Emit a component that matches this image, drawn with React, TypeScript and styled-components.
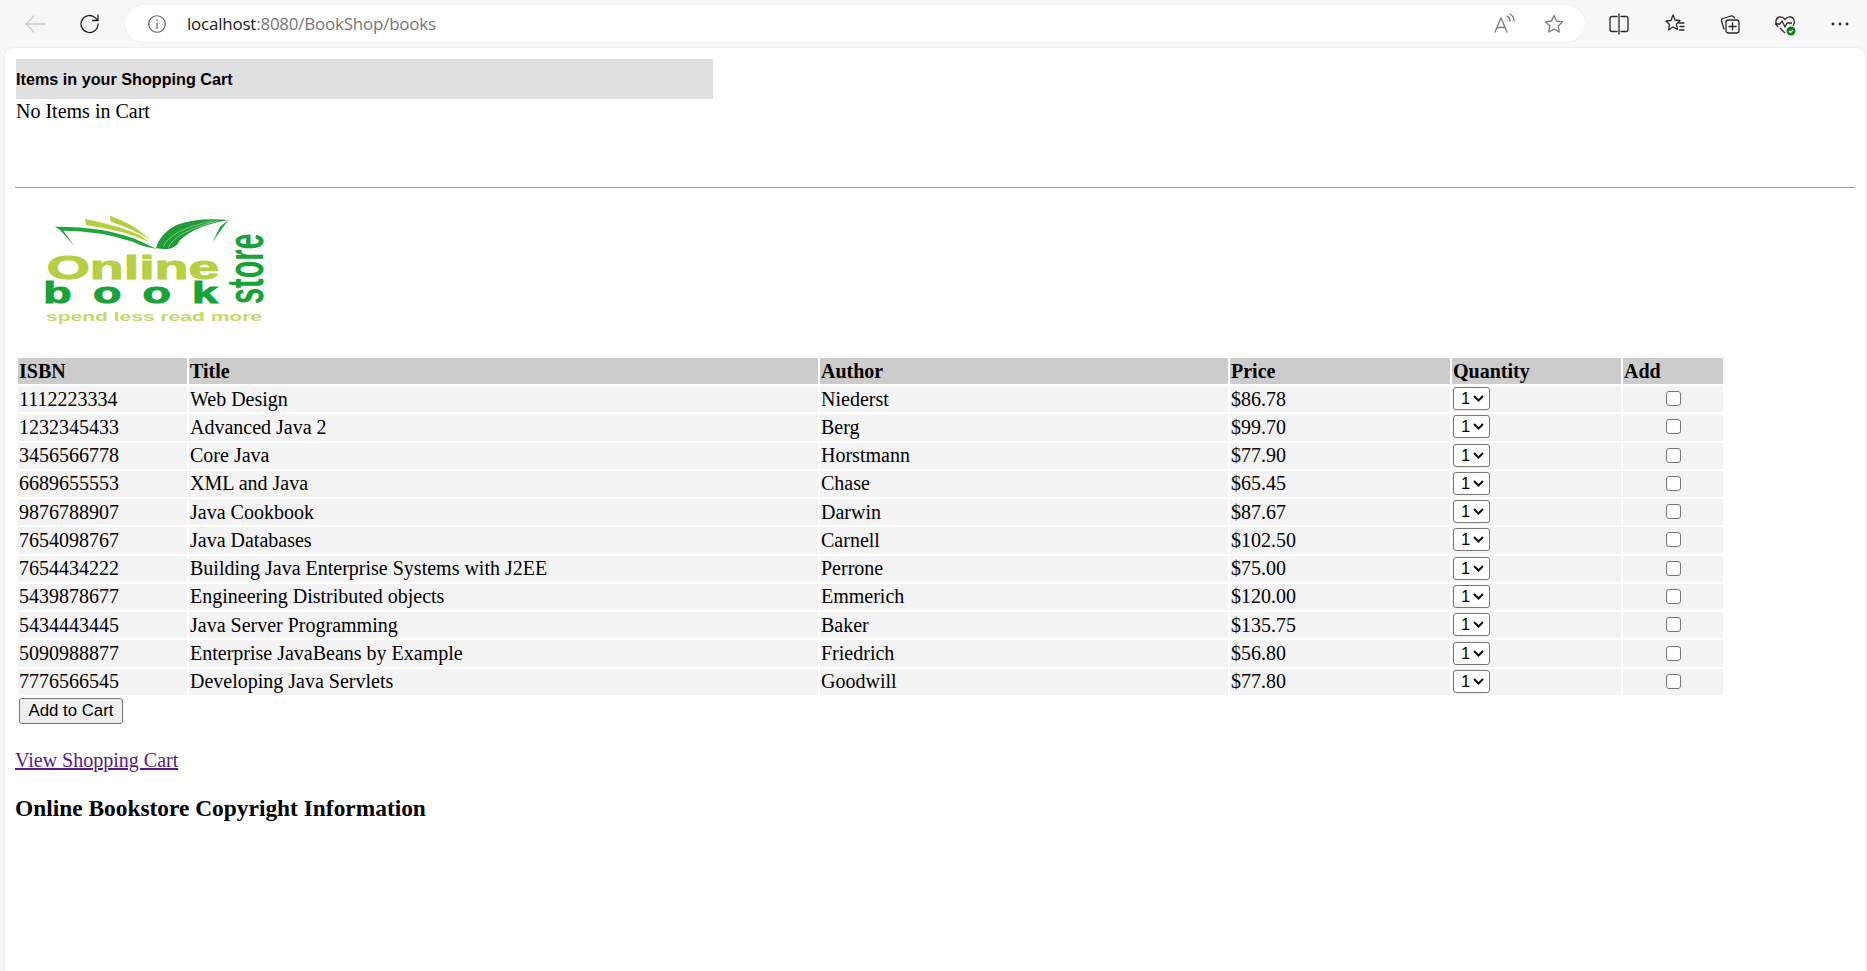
import React from 'react';
import styled, { createGlobalStyle } from 'styled-components';

const GlobalStyle = createGlobalStyle`
  html, body {
    margin: 0;
    padding: 0;
    height: 100%;
    overflow: hidden;
    background: #f7f7f7;
  }
`;

const Window = styled.div`
  width: 1867px;
  height: 971px;
  display: flex;
  flex-direction: column;
  background: #f7f7f7;
  overflow: hidden;
`;

const Toolbar = styled.div`
  height: 48px;
  flex: none;
  display: flex;
  align-items: center;
  box-sizing: border-box;
  padding: 0 0 1px 22px;
`;

const NavButton = styled.div<{ gap?: number }>`
  width: 26px;
  height: 26px;
  flex: none;
  display: flex;
  align-items: center;
  justify-content: center;
  margin-right: ${(p) => p.gap ?? 0}px;
`;

const AddressBar = styled.div`
  width: 1460px;
  height: 37px;
  flex: none;
  margin-right: 21px;
  background: #fff;
  border-radius: 19px;
  display: flex;
  align-items: center;
  padding: 0 18px 0 21px;
  box-sizing: border-box;
  box-shadow: 0 0 2px rgba(0, 0, 0, 0.08);
`;

const Url = styled.div`
  flex: 1;
  margin-left: 19px;
  font: 16.95px 'Open Sans', 'Noto Sans', sans-serif;
  color: #767676;
  letter-spacing: -0.2px;
  span {
    color: #1a1a1a;
  }
`;

const Page = styled.div`
  flex: 1;
  margin: 0 2px 0 5px;
  background: #fff;
  border-radius: 8px 8px 0 0;
  box-shadow: 0 0 2px rgba(0, 0, 0, 0.12);
  padding: 11px 10px 0 10px;
  font: 20px/22px 'Liberation Serif', 'Times New Roman', serif;
  color: #000;
`;

const CartPanel = styled.div`
  width: 697px;
  margin-left: 1px;
`;

const CartHeading = styled.div`
  height: 40px;
  background: #e0e0e0;
  font: bold 16.2px/41px 'Liberation Sans', Arial, sans-serif;
`;

const CartEmpty = styled.div`
  height: 26px;
  line-height: 25px;
`;

const Rule = styled.hr`
  margin: 62px 0 0 0;
  border: 0;
  height: 1px;
  background: #9a9a9a;
`;

const Logo = styled.svg`
  display: block;
  margin: 12px 0 12px 3px;
  overflow: visible;
`;

const BookTable = styled.table`
  border-collapse: separate;
  border-spacing: 2px;
  table-layout: fixed;
  width: 1709px;
  margin-left: 1px;
`;

const HeadCell = styled.th`
  background: #cccccc;
  padding: 2px 1px;
  height: 22px;
  text-align: left;
  font-weight: bold;
  line-height: 22px;
`;

const BodyCell = styled.td<{ $center?: boolean }>`
  background: #f3f3f3;
  padding: 1.5px 1px 2.5px;
  height: 22.28px;
  line-height: 22px;
  text-align: ${(p) => (p.$center ? 'center' : 'left')};
`;

const QuantitySelect = styled.div`
  width: 37px;
  height: 23px;
  margin: -1px 0;
  box-sizing: border-box;
  border: 1px solid #767676;
  border-radius: 3px;
  background: #fff;
  display: flex;
  align-items: center;
  justify-content: space-between;
  padding: 0 5px 0 7px;
  font: 16.5px 'Liberation Sans', Arial, sans-serif;
`;

const AddBox = styled.input`
  appearance: none;
  display: block;
  margin: 0 auto;
  width: 15px;
  height: 15px;
  box-sizing: border-box;
  border: 1px solid #767676;
  border-radius: 3px;
  background: #fff;
`;

const CartButton = styled.button`
  display: block;
  margin: 1px 0 0 4px;
  width: 104px;
  height: 26px;
  box-sizing: border-box;
  padding: 0;
  background: #efefef;
  border: 1px solid #767676;
  border-radius: 3px;
  color: #000;
  font: 16.8px 'Liberation Sans', Arial, sans-serif;
`;

const CartLink = styled.a`
  display: block;
  margin-top: 25px;
  width: max-content;
  color: #551a8b;
  text-decoration: underline;
`;

const Copyright = styled.h3`
  margin: 24px 0 0;
  font-size: 23.4px;
  line-height: 26px;
  font-weight: bold;
`;

const books = [
  ['1112223334', 'Web Design', 'Niederst', '$86.78'],
  ['1232345433', 'Advanced Java 2', 'Berg', '$99.70'],
  ['3456566778', 'Core Java', 'Horstmann', '$77.90'],
  ['6689655553', 'XML and Java', 'Chase', '$65.45'],
  ['9876788907', 'Java Cookbook', 'Darwin', '$87.67'],
  ['7654098767', 'Java Databases', 'Carnell', '$102.50'],
  ['7654434222', 'Building Java Enterprise Systems with J2EE', 'Perrone', '$75.00'],
  ['5439878677', 'Engineering Distributed objects', 'Emmerich', '$120.00'],
  ['5434443445', 'Java Server Programming', 'Baker', '$135.75'],
  ['5090988877', 'Enterprise JavaBeans by Example', 'Friedrich', '$56.80'],
  ['7776566545', 'Developing Java Servlets', 'Goodwill', '$77.80'],
];

const columns = [169, 629, 408, 220, 169, 100];
const headers = ['ISBN', 'Title', 'Author', 'Price', 'Quantity', 'Add'];

const logoFont = "'Liberation Sans', Arial, sans-serif";

// drawn in 3x units so the numbers line up with the zoomed crop
const BookLogo = () => (
  <Logo width="282" height="144" viewBox="54 60 846 432">
    <path d="M165 140 Q300 138 400 175 Q440 192 470 207 L500 209 Q440 207 400 186 Q300 152 190 152 L222 197 L180 150 Z" fill="#1fa53a" />
    <path d="M255 117 Q350 135 420 165 L447 186 Q370 150 258 136 Z" fill="#b5cf3e" />
    <path d="M330 107 Q400 130 452 180 Q400 147 332 125 Z" fill="#b5cf3e" />
    <path d="M685 120 Q590 112 530 135 Q480 160 468 205 L500 208 Q530 205 540 180 Q590 135 685 120 Z" fill="#1f9c36" />
    <path d="M490 200 Q510 150 640 122M505 203 Q525 155 655 122" fill="none" stroke="#d9efd9" strokeWidth="1.5" />
    <path d="M685 120 L638 185 L660 140 Z" fill="#1fa53a" />
    <text x="140" y="296" textLength="518" lengthAdjust="spacingAndGlyphs" fontFamily={logoFont} fontWeight="bold" fontSize="100" stroke="#b6cf45" strokeWidth="3" fill="#b6cf45">Online</text>
    <text transform="translate(130 369) scale(1.55 1)" textLength="338" fontFamily={logoFont} fontWeight="bold" fontSize="90" stroke="#18a238" strokeWidth="3" fill="#18a238">book</text>
    <text x="138" y="424" textLength="648" lengthAdjust="spacingAndGlyphs" fontFamily={logoFont} fontWeight="bold" fontSize="39" fill="#c3da68">spend less read more</text>
    <text transform="translate(788 372) rotate(-90)" textLength="212" lengthAdjust="spacingAndGlyphs" fontFamily={logoFont} fontWeight="bold" fontSize="156" fill="#18a238">store</text>
  </Logo>
);

const Icon: React.FC<{ size?: number; color?: string; children: React.ReactNode }> = ({
  size = 24,
  color = '#2b2b2b',
  children,
}) => (
  <svg width={size} height={size} viewBox="0 0 24 24" fill="none" stroke={color} strokeWidth="1.3" strokeLinecap="round" strokeLinejoin="round">
    {children}
  </svg>
);

const starPath = 'M12 3.5l2.6 5.5 6 .8-4.4 4.2 1.1 6-5.3-2.9-5.3 2.9 1.1-6L3.4 9.8l6-.8z';

const App: React.FC = () => (
  <Window>
    <GlobalStyle />
    <Toolbar>
      <NavButton gap={29}>
        <Icon color="#c8c8c8">
          <path d="M22 12H3M11 4l-8 8 8 8" />
        </Icon>
      </NavButton>
      <NavButton gap={22}>
        <Icon color="#1f1f1f">
          <path d="M20 12a8.500 8.500 0 1 1-2.600-6.100L20 8.500M20 3v5.500h-5.500" />
        </Icon>
      </NavButton>
      <AddressBar>
        <Icon size={22} color="#5f5f5f">
          <circle cx="12" cy="12" r="9" />
          <path d="M12 11v6M12 7.500v.5" />
        </Icon>
        <Url>
          <span>localhost</span>:8080/BookShop/books
        </Url>
        <NavButton gap={24}>
          <Icon color="#7a7a7a">
            <path d="M3 20L9 6l6 14M5 15.500h8M15 4c2 1 3 3 3 5M18 2c2.500 1.500 4 4 4 7" />
          </Icon>
        </NavButton>
        <NavButton>
          <Icon color="#7a7a7a">
            <path d={starPath} />
          </Icon>
        </NavButton>
      </AddressBar>
      <NavButton gap={30}>
        <Icon>
          <path d="M10 4.500H5a2 2 0 0 0-2 2v11a2 2 0 0 0 2 2h5M14 4.500h5a2 2 0 0 1 2 2v11a2 2 0 0 1-2 2h-5M12 2v20" />
        </Icon>
      </NavButton>
      <NavButton gap={29}>
        <Icon>
          <path d="M10 3l2 5 5 .5-3.500 3.500 1 5.500L10 15l-4.500 3 1-5.500L3 9l5-.5zM16 11h5M17 14.500h4M16.500 18h4.500" />
        </Icon>
      </NavButton>
      <NavButton gap={29}>
        <Icon>
          <path d="M6 17L3.500 9a2 2 0 0 1 1.500-2.500L13 4c2-.5 3 .5 3.500 2" />
          <rect x="8" y="8" width="13" height="13" rx="2.500" />
          <path d="M14.500 11v7M11 14.500h7" />
        </Icon>
      </NavButton>
      <NavButton gap={29}>
        <svg width="24" height="24" viewBox="0 0 24 24" fill="none" stroke="#2b2b2b" strokeWidth="1.3" strokeLinejoin="round">
          <path d="M5 15C2 12 2 6 6.500 5c2.500-.5 4 .5 5.500 2.500C13.500 5.500 15 4.500 17.500 5 22 6 22 11 20 14M12 21l-5-5" />
          <path d="M2 12h5l2-3 3 6 2-4h5" />
          <circle cx="18" cy="19" r="4.500" fill="#107c10" stroke="none" />
          <path d="M16 19l1.500 1.500 2.500-2.500" stroke="#fff" />
        </svg>
      </NavButton>
      <NavButton>
        <svg width="24" height="24" viewBox="0 0 24 24" fill="#2b2b2b">
          <circle cx="5" cy="12" r="1.400" />
          <circle cx="12" cy="12" r="1.400" />
          <circle cx="19" cy="12" r="1.400" />
        </svg>
      </NavButton>
    </Toolbar>
    <Page>
      <CartPanel>
        <CartHeading>Items in your Shopping Cart</CartHeading>
        <CartEmpty>No Items in Cart</CartEmpty>
      </CartPanel>
      <Rule />
      <BookLogo />
      <BookTable>
        <colgroup>
          {columns.map((w, i) => (
            <col key={i} style={{ width: w }} />
          ))}
        </colgroup>
        <thead>
          <tr>
            {headers.map((h) => (
              <HeadCell key={h}>{h}</HeadCell>
            ))}
          </tr>
        </thead>
        <tbody>
          {books.map((b) => (
            <tr key={b[0]}>
              {b.map((v) => (
                <BodyCell key={v}>{v}</BodyCell>
              ))}
              <BodyCell>
                <QuantitySelect>
                  1
                  <svg width="11" height="7" viewBox="0 0 11 7" fill="none" stroke="#111" strokeWidth="2">
                    <path d="M1 1l4.500 4.500L10 1" />
                  </svg>
                </QuantitySelect>
              </BodyCell>
              <BodyCell $center>
                <AddBox type="checkbox" />
              </BodyCell>
            </tr>
          ))}
        </tbody>
      </BookTable>
      <CartButton>Add to Cart</CartButton>
      <CartLink href="#">View Shopping Cart</CartLink>
      <Copyright>Online Bookstore Copyright Information</Copyright>
    </Page>
  </Window>
);

export default App;
